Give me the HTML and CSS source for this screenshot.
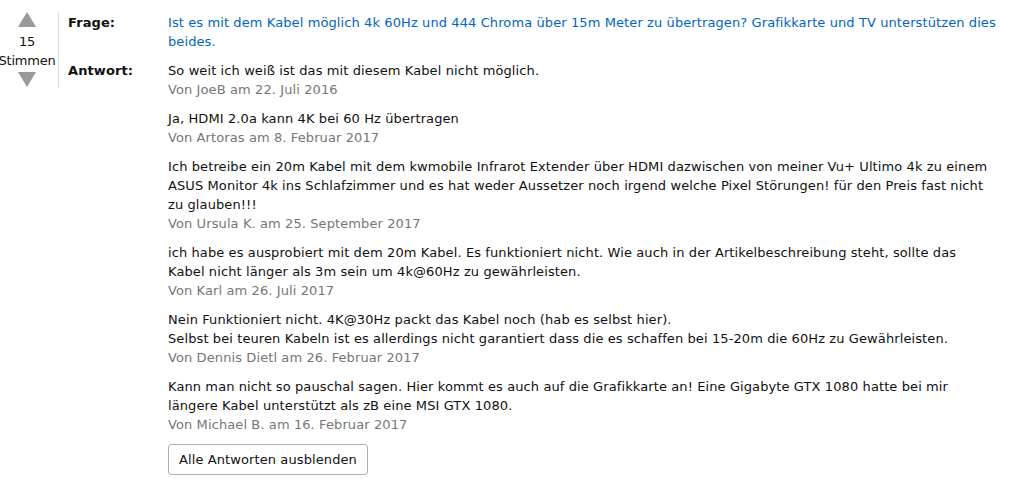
FILE: index.html
```html
<!DOCTYPE html>
<html lang="de">
<head>
<meta charset="utf-8">
<link rel="stylesheet" href="styles.css">
</head>
<body>
<div class="qa">
  <div class="vote">
    <span class="arrow up"></span>
    <div class="count">15</div>
    <div class="count">Stimmen</div>
    <span class="arrow down"></span>
  </div>
  <div class="main">
    <div class="row">
      <div class="label">Frage:</div>
      <div class="content"><a class="question" href="#">Ist es mit dem Kabel möglich 4k 60Hz und 444 Chroma über 15m Meter zu übertragen? Grafikkarte und TV unterstützen dies beides.</a></div>
    </div>
    <div class="row answers-row">
      <div class="label">Antwort:</div>
      <div class="content">
        <div class="answer">
          <div class="text">So weit ich weiß ist das mit diesem Kabel nicht möglich.</div>
          <div class="by">Von JoeB am 22. Juli 2016</div>
        </div>
        <div class="answer">
          <div class="text">Ja, HDMI 2.0a kann 4K bei 60 Hz übertragen</div>
          <div class="by">Von Artoras am 8. Februar 2017</div>
        </div>
        <div class="answer">
          <div class="text">Ich betreibe ein 20m Kabel mit dem kwmobile Infrarot Extender über HDMI dazwischen von meiner Vu+ Ultimo 4k zu einem ASUS Monitor 4k ins Schlafzimmer und es hat weder Aussetzer noch irgend welche Pixel Störungen! für den Preis fast nicht zu glauben!!!</div>
          <div class="by">Von Ursula K. am 25. September 2017</div>
        </div>
        <div class="answer">
          <div class="text">ich habe es ausprobiert mit dem 20m Kabel. Es funktioniert nicht. Wie auch in der Artikelbeschreibung steht, sollte das Kabel nicht länger als 3m sein um 4k@60Hz zu gewährleisten.</div>
          <div class="by">Von Karl am 26. Juli 2017</div>
        </div>
        <div class="answer">
          <div class="text">Nein Funktioniert nicht. 4K@30Hz packt das Kabel noch (hab es selbst hier).<br>Selbst bei teuren Kabeln ist es allerdings nicht garantiert dass die es schaffen bei 15-20m die 60Hz zu Gewährleisten.</div>
          <div class="by">Von Dennis Dietl am 26. Februar 2017</div>
        </div>
        <div class="answer">
          <div class="text">Kann man nicht so pauschal sagen. Hier kommt es auch auf die Grafikkarte an! Eine Gigabyte GTX 1080 hatte bei mir längere Kabel unterstützt als zB eine MSI GTX 1080.</div>
          <div class="by">Von Michael B. am 16. Februar 2017</div>
        </div>
        <button class="btn" type="button">Alle Antworten ausblenden</button>
      </div>
    </div>
  </div>
</div>
</body>
</html>
```

FILE: styles.css
```css
html, body {
  margin: 0;
  padding: 0;
  background: #fff;
}
body {
  font-family: "DejaVu Sans", Verdana, sans-serif;
  font-size: 13px;
  line-height: 19px;
  letter-spacing: 0.1px;
  color: #111;
}
.qa {
  display: flex;
  align-items: flex-start;
  padding-top: 13px;
}
.vote {
  width: 54px;
  height: 76px;
  margin-top: -1px;
  padding-right: 4px;
  border-right: 1px solid #ddd;
  margin-right: 9px;
  display: flex;
  flex-direction: column;
  align-items: center;
}
.arrow {
  display: block;
  flex: none;
  width: 0;
  height: 0;
  border-left: 9px solid transparent;
  border-right: 9px solid transparent;
}
.arrow.up {
  border-bottom: 15px solid #999;
  margin-bottom: 5px;
}
.arrow.down {
  border-top: 15px solid #999;
  margin-top: 2px;
}
.count {
  font-size: 13px;
  line-height: 19px;
  letter-spacing: -0.2px;
  color: #111;
  white-space: nowrap;
}
.main {
  flex: 1;
  padding-right: 16px;
}
.row {
  display: flex;
}
.answers-row {
  margin-top: 10px;
}
.label {
  width: 100px;
  flex: none;
  font-weight: bold;
}
.content {
  flex: 1;
}
.question {
  color: #0066c0;
  text-decoration: none;
}
.answer {
  margin-bottom: 10px;
}
.by {
  color: #767676;
}
.btn {
  font-family: inherit;
  font-size: 13px;
  letter-spacing: 0.1px;
  color: #111;
  background: #fff;
  border: 1px solid #adb1b8;
  border-radius: 3px;
  height: 31px;
  padding: 0 10px;
  cursor: pointer;
}
```
